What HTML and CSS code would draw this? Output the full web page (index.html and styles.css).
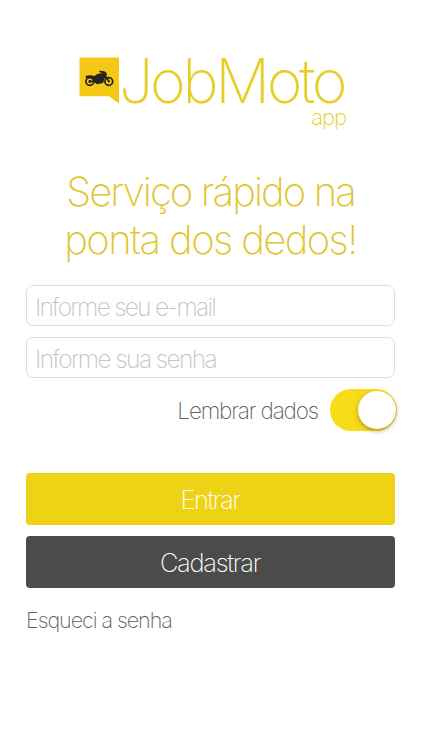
FILE: index.html
```html
<!DOCTYPE html>
<html lang="pt-BR">
<head>
<meta charset="utf-8">
<title>JobMoto app</title>
<link rel="stylesheet" href="styles.css">
</head>
<body>
<main class="screen">
  <header class="brand">
    <svg class="brand-icon" viewBox="0 0 40 47" aria-hidden="true">
      <path fill="#f5c816" d="M.5 .5H40V46.5L30 39.3H.5Z"/>
      <g fill="none" stroke="#25231b" stroke-width="1.7">
        <circle cx="10.8" cy="24.5" r="3.9"/>
        <circle cx="29.8" cy="24.5" r="3.9"/>
        <path d="M29.8 24.3L24 15.2L21.5 14.6M10.8 24.3H22" stroke-linecap="round"/>
      </g>
      <path fill="#25231b" d="M6.5 19.2Q10 17.6 15.5 19L18 17.2Q21 15.8 24.5 16.3L27.2 15.5L28 18L26 19.2L29 20.2L25.6 21.4L24 26L18 27.2L14.8 25L13 21.5L7 21Z"/>
      <path fill="#25231b" d="M20.5 13.8L26 14.4L27.3 16L24.5 17L23 15.3L20.5 15Z"/>
      <circle cx="10.8" cy="24.5" r="1.4" fill="#25231b"/>
      <circle cx="29.8" cy="24.5" r="1.1" fill="#25231b"/>
    </svg>
    <div class="brand-name"><span>JobMoto</span></div>
  </header>
  <div class="brand-sub"><span>app</span></div>
  <h1 class="tagline"><span class="line-one">Serviço rápido na</span><br><span class="line-two">ponta dos dedos!</span></h1>
  <form class="login">
    <div class="field"><span class="hint hint-email">Informe seu e-mail</span></div>
    <div class="field"><span class="hint hint-pass">Informe sua senha</span></div>
    <div class="remember"><span class="remember-label">Lembrar dados</span><span class="switch"><span class="knob"></span></span></div>
    <div class="button primary"><span>Entrar</span></div>
    <div class="button secondary"><span>Cadastrar</span></div>
    <div class="forgot"><span>Esqueci a senha</span></div>
  </form>
</main>
</body>
</html>
```

FILE: styles.css
```css
* { box-sizing: border-box; }
body { margin: 0; background: #fff; font-family: Inter, "Liberation Sans", sans-serif; font-weight: 200; }
.screen { width: 422px; height: 750px; padding: 57px 27px 0 26px; overflow: hidden; background: #fff; white-space: nowrap; }
.brand { display: flex; height: 47px; padding-left: 53px; }
.brand-icon { width: 40px; height: 47px; flex: none; }
.brand-name { margin: -12px 0 0 0; font-size: 61px; line-height: 72px; font-weight: 200; color: #e6cf25; letter-spacing: -3.3px; }
.brand-sub { height: 28px; padding-right: 49px; text-align: right; font-size: 22px; line-height: 26px; color: #e6cf25; letter-spacing: -1px; }
.tagline { margin: 36px 0 0; text-align: center; font-size: 40px; line-height: 48px; font-weight: 200; color: #dfc62d; }
.line-one { letter-spacing: -1.9px; }
.line-two { letter-spacing: -1.6px; }
.field { height: 41px; margin-top: 11px; padding-left: 8px; border: 1px solid #dcdddf; border-radius: 7px; font-size: 24.5px; line-height: 43px; color: #c3c4c9; }
.hint-email { letter-spacing: -1.75px; }
.hint-pass { letter-spacing: -1.6px; }
.login { padding-top: 10px; }
.remember { display: flex; justify-content: flex-end; margin-top: 11px; height: 43px; margin-right: -2px; font-size: 22.5px; line-height: 43px; color: #606060; letter-spacing: -1.15px; }
.switch { display: flex; justify-content: flex-end; align-items: center; width: 67px; height: 42px; margin-left: 12px; padding-right: 1px; border-radius: 21px; background: #f8dc18; }
.knob { width: 38px; height: 38px; border-radius: 50%; background: #fff; box-shadow: 0 2px 5px rgba(60, 50, 0, .4); }
.button { height: 52px; margin-bottom: 11px; padding-right: 1px; border-radius: 4px; text-align: center; font-size: 25.5px; line-height: 54px; color: #fff; letter-spacing: -1.3px; }
.primary { margin-top: 41px; background: #edd215; letter-spacing: -1.5px; }
.secondary { background: #4b4b4b; }
.forgot { padding-top: 7px; font-size: 21.5px; line-height: 28px; color: #606060; letter-spacing: -1.05px; }
```
